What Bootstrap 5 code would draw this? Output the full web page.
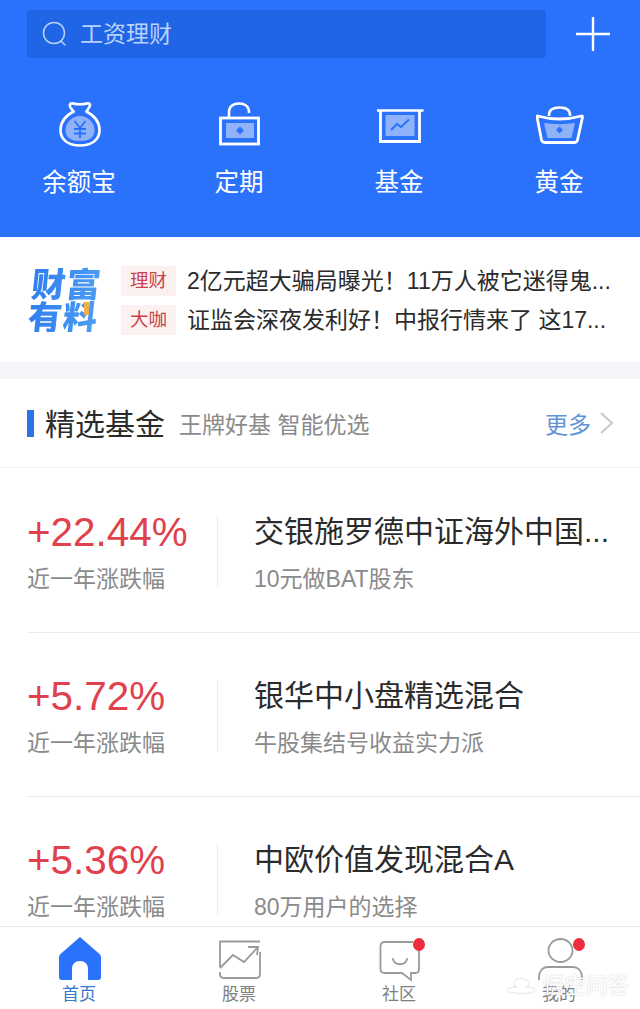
<!DOCTYPE html>
<html lang="zh-CN">
<head>
    <meta charset="UTF-8">
    <meta name="viewport" content="width=device-width, initial-scale=1.0">
    <link rel="stylesheet" href="https://cdn.jsdelivr.net/npm/bootstrap@5.3.3/dist/css/bootstrap.min.css">
    <style>
        html, body { height: 100%; }
        body { font-family: "Liberation Sans", "Noto Sans CJK SC", sans-serif; background: #fff; color: #2b2b2b; overflow: hidden; }
        .app-page { height: 1009px; }
        .app-main { min-height: 0; overflow: hidden; }
        .top-blue { background: #2a72fb; height: 237px; padding: 10px 27px 0; }
        .search-box { background: #2065e6; width: 519px; height: 48px; border-radius: 3px; padding-left: 15px; color: #b9d2fd; font-size: 23px; gap: 12px; }
        .plus-btn { margin-left: 30px; }
        .quick-row { margin: 42px -27px 0; }
        .quick-item { width: 160px; color: #fff; font-size: 24.5px; line-height: 30px; }
        .quick-icon { height: 48px; margin-bottom: 20px; }
        .quick-icon svg { display: block; margin: 0 auto; }
        .quick-label { padding-right: 2px; }
        .news-wrap { height: 125px; padding: 29px 0 0 27px; }
        .news-logo { position: relative; flex: none; width: 94px; height: 70px; }
        .logo-text { width: 76px; margin-left: 3px; font-family: "Noto Sans CJK SC", sans-serif; font-weight: 900; font-size: 34px; line-height: 33px; letter-spacing: 1px; white-space: nowrap; background: linear-gradient(90deg, #2f7ff0, #4f9ff5); -webkit-background-clip: text; background-clip: text; -webkit-text-fill-color: transparent; transform: skewX(-6deg); }
        .logo-spot { position: absolute; left: 57px; top: 36px; width: 5px; height: 13px; background: #efb04a; }
        .news-list { width: 492px; }
        .news-line { height: 30px; margin-bottom: 9px; font-size: 23px; line-height: 30px; color: #2b2b2b; }
        .news-tag { flex: none; width: 55px; height: 30px; background: #fbf1f0; color: #c9424c; font-size: 18.5px; text-align: center; margin-right: 11px; }
        .news-text { white-space: nowrap; width: 426px; overflow: hidden; }
        .grey-gap { height: 17px; background: #f4f5f8; }
        .sec-head { height: 89px; border-bottom: 1px solid #f0f0f0; padding: 0 26px 0 27px; }
        .sec-bar { width: 7px; height: 27px; background: #2a72e8; margin-right: 11px; }
        .sec-title { font-size: 30px; color: #2b2b2b; margin-top: 2px; }
        .sec-sub { font-size: 23px; color: #8a8a8a; margin-left: 14px; margin-top: 4px; }
        .sec-more { font-size: 23px; color: #5f93d6; margin-left: auto; margin-top: 4px; }
        #fund-list { margin-top: 1px; }
        .fund-row { height: 164px; margin-left: 27px; border-bottom: 1px solid #ececec; padding-top: 40px; }
        .fund-row:last-child { border-bottom: 0; }
        .fund-left { width: 190px; }
        .fund-rule { width: 1px; height: 71px; margin-top: 7px; background: #ececec; }
        .fund-rate { font-size: 40.4px; line-height: 46px; color: #e0414d; }
        .fund-hint { font-size: 23px; line-height: 30px; margin-top: 9px; color: #8a8a8a; }
        .fund-right { padding-left: 36px; }
        .fund-name { font-size: 30px; line-height: 46px; color: #2b2b2b; white-space: nowrap; }
        .tabbar { height: 83px; flex: none; background: #fff; border-top: 1px solid #ececec; }
        .tab-item { width: 160px; font-size: 17px; line-height: 20px; color: #808080; position: relative; }
        .tab-item.active { color: #3a78c9; }
        .tab-icon { height: 45px; margin-top: 9px; margin-bottom: 4px; }
        .tab-icon svg { display: block; margin: 0 auto; overflow: visible; }
        .tab-label { padding-right: 2px; }
        .tab-dot { position: absolute; background: #ee2e3c; width: 12px; height: 13px; border-radius: 50%; top: 11px; left: 93px; }
        .watermark { position: absolute; left: 508px; top: 973px; color: #fff; font-size: 21.5px; line-height: 26px; text-shadow: 0 0 2px rgba(120,120,120,.4); }
        .watermark svg { filter: drop-shadow(0 0 1px rgba(120,120,120,.45)); }
    </style>
    <title>理财</title>
</head>
<body>
    <div class="app-page d-flex flex-column position-relative">
        <div class="app-main flex-grow-1">
            <div class="top-blue">
                <div class="d-flex align-items-center">
                    <div class="search-box d-flex align-items-center">
                        <svg width="26" height="28" viewBox="0 0 26 28" fill="none" stroke="#b9d2fd" stroke-width="1.5"><circle cx="12" cy="13" r="10.500"/><path d="M19 21l4 4" stroke-linecap="round"/></svg>
                        <span>工资理财</span>
                    </div>
                    <svg class="plus-btn" width="34" height="34" viewBox="0 0 34 34" stroke="#fff" stroke-width="2.400"><path d="M0 17h34M17 0v34"/></svg>
                </div>
                <div class="quick-row d-flex">
                    <div class="quick-item text-center">
                        <div class="quick-icon">
                            <svg width="48" height="48" viewBox="-2 -1 48 48" fill="none">
                                <path d="M14 2.200c5 1.400 11 1.400 16 0 2.400 0 2.400 2.400 1 4.400L28.500 10.500C36 14.500 41.500 21 41.500 29c0 10-8 15.500-19.500 15.500S2.500 39 2.500 29c0-8 5.500-14.500 13-18.500L12.500 6.600C11.500 4.600 11.500 2.200 14 2.200z" stroke="#fff" stroke-width="2.600"/>
                                <path d="M22 15c8 0 14.500 7 14.500 14 0 8-6 11-14.500 11S7.500 37 7.500 29c0-7 6.500-14 14.500-14z" fill="#8fb2fb"/>
                                <path d="M16.500 20l5.500 7 5.500-7M16 28h12M16 32.500h12M22 27v10" stroke="#2a72fb" stroke-width="1.900"/>
                            </svg>
                        </div>
                        <div class="quick-label">余额宝</div>
                    </div>
                    <div class="quick-item text-center">
                        <div class="quick-icon">
                            <svg width="48" height="48" viewBox="-3 -2 48 48" fill="none">
                                <path d="M10 16V10C10 4.500 14 1.500 20 1.500S30 4.500 30 10v1" stroke="#fff" stroke-width="2.600"/>
                                <rect x="1.500" y="16" width="38" height="26" stroke="#fff" stroke-width="2.800"/>
                                <rect x="7" y="21" width="28" height="15" fill="#8fb2fb"/>
                                <path d="M21 24.500l4 4-4 4-4-4z" fill="#2a72fb"/>
                            </svg>
                        </div>
                        <div class="quick-label">定期</div>
                    </div>
                    <div class="quick-item text-center">
                        <div class="quick-icon">
                            <svg width="48" height="48" viewBox="-1 -8 48 48" fill="none">
                                <path d="M0 2.500h46.500" stroke="#fff" stroke-width="2.600"/>
                                <path d="M3.500 2v31.500h39V2" stroke="#fff" stroke-width="2.800"/>
                                <rect x="8.500" y="7" width="29" height="21" fill="#8fb2fb"/>
                                <path d="M14 22l6-6 4 3 8-7.500" stroke="#2a72fb" stroke-width="2"/>
                            </svg>
                        </div>
                        <div class="quick-label">基金</div>
                    </div>
                    <div class="quick-item text-center">
                        <div class="quick-icon">
                            <svg width="48" height="48" viewBox="0 -6 48 48" fill="none">
                                <path d="M13 10v-1C13 4 17 1.500 23.500 1.500S34 4 34 9v1" stroke="#fff" stroke-width="2.600"/>
                                <path d="M1.500 10c7 2 14 3 22 3s15-1 22-3c.8 0 1 .5 1 1l-5 23c-.4 1.800-1.500 2.500-3.500 2.500H9c-2 0-3-.7-3.500-2.500L1 11c0-.5 0-1 .5-1z" stroke="#fff" stroke-width="2.800"/>
                                <path d="M8 17c10 1.500 21 1.500 31 0l-3.500 15h-24z" fill="#8fb2fb"/>
                                <path d="M23.500 20.500l3.500 3.500-3.500 3.500-3.500-3.500z" fill="#2a72fb"/>
                            </svg>
                        </div>
                        <div class="quick-label">黄金</div>
                    </div>
                </div>
            </div>

            <div class="news-wrap d-flex">
                <div class="news-logo">
                    <div class="logo-text">财富<br>有料</div>
                    <span class="logo-spot"></span>
                </div>
                <div class="news-list">
                    <div class="news-line d-flex">
                        <span class="news-tag">理财</span>
                        <span class="news-text">2亿元超大骗局曝光！11万人被它迷得鬼...</span>
                    </div>
                    <div class="news-line d-flex">
                        <span class="news-tag">大咖</span>
                        <span class="news-text">证监会深夜发利好！中报行情来了 这17...</span>
                    </div>
                </div>
            </div>
            <div class="grey-gap"></div>

            <div class="sec-head d-flex align-items-center">
                <span class="sec-bar"></span>
                <span class="sec-title">精选基金</span>
                <span class="sec-sub">王牌好基 智能优选</span>
                <span class="sec-more">更多</span>
                <svg class="ms-2" width="15" height="24" viewBox="0 0 15 24" fill="none" stroke="#c8c8c8" stroke-width="2"><path d="M2 2l11 10L2 22"/></svg>
            </div>

            <div id="fund-list"></div>
        </div>

        <div class="tabbar d-flex">
            <div class="tab-item active text-center">
                <div class="tab-icon">
                    <svg width="42" height="45" viewBox="0 0 42 45"><path d="M21 1L40.500 18c1 1 1.500 2 1.500 3v20c0 2-1 3-3 3H29V33c0-5-3-8-8-8s-8 3-8 8v11H3c-2 0-3-1-3-3V21c0-1 .5-2 1.500-3z" fill="#2a72fb"/></svg>
                </div>
                <div class="tab-label">首页</div>
            </div>
            <div class="tab-item text-center">
                <div class="tab-icon">
                    <svg width="42" height="45" viewBox="0 0 42 45" fill="none" stroke="#9b9b9b" stroke-width="1.800"><path d="M41 5.500H1V31M1 36v2c0 2.500 1.500 4 4 4h32c2.500 0 4-1.500 4-4V16"/><path d="M1 32l13-13 11 7 14-15M29 11h10l-1 8"/></svg>
                </div>
                <div class="tab-label">股票</div>
            </div>
            <div class="tab-item text-center">
                <div class="tab-icon">
                    <svg width="42" height="45" viewBox="0 0 42 45" fill="none" stroke="#9b9b9b" stroke-width="1.800"><path d="M34 6H6C3 6 1.500 7.500 1.500 10v23c0 2.500 1.500 4 4 4H23l9 7v-7h4c2.500 0 4-1.500 4-4V12"/><path d="M14 23c1 7 13 7 14 0" stroke-linecap="round"/></svg>
                </div>
                <div class="tab-label">社区</div>
                <span class="tab-dot"></span>
            </div>
            <div class="tab-item text-center">
                <div class="tab-icon">
                    <svg width="42" height="45" viewBox="0 0 42 45" fill="none" stroke="#9b9b9b" stroke-width="1.800"><ellipse cx="21.500" cy="14.500" rx="12" ry="11.500"/><path d="M0 44v-3c0-6 4-10 9-10h25c5 0 9 4 9 10v3"/></svg>
                </div>
                <div class="tab-label">我的</div>
                <span class="tab-dot"></span>
            </div>
        </div>
        <div class="watermark d-flex align-items-center gap-2">
            <svg width="27" height="14" viewBox="0 0 27 14" fill="#fff"><ellipse cx="13.500" cy="4.500" rx="7" ry="4.500"/><ellipse cx="13.500" cy="11" rx="13.500" ry="3"/></svg>
            <span>悟空问答</span>
        </div>
    </div>
    <script>
        const funds = [
            { rate: '+22.44%', name: '交银施罗德中证海外中国...', desc: '10元做BAT股东' },
            { rate: '+5.72%', name: '银华中小盘精选混合', desc: '牛股集结号收益实力派' },
            { rate: '+5.36%', name: '中欧价值发现混合A', desc: '80万用户的选择' }
        ];
        const list = document.getElementById('fund-list');
        funds.forEach(fund => {
            let row = document.createElement('div');
            row.classList.add('fund-row', 'd-flex');
            row.innerHTML = `
                <div class="fund-left">
                    <div class="fund-rate">${fund.rate}</div>
                    <div class="fund-hint">近一年涨跌幅</div>
                </div>
                <div class="fund-rule"></div>
                <div class="fund-right">
                    <div class="fund-name">${fund.name}</div>
                    <div class="fund-hint">${fund.desc}</div>
                </div>
            `;
            list.appendChild(row);
        });
    </script>
    <script src="https://cdn.jsdelivr.net/npm/bootstrap@5.3.3/dist/js/bootstrap.bundle.min.js"></script>
</body>
</html>
